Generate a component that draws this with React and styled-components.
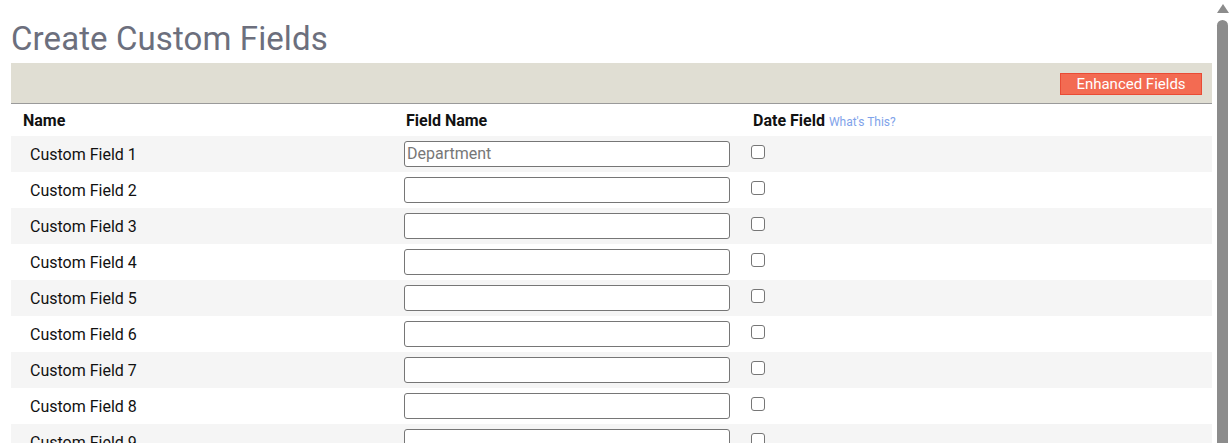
import React from "react";
import styled, { createGlobalStyle } from "styled-components";

const Global = createGlobalStyle`
  html, body { margin: 0; padding: 0; background: #fff; overflow: hidden; }
  body { font-family: Roboto, "Liberation Sans", sans-serif; color: #111; }
`;

const Frame = styled.div`
  display: flex;
  height: 100vh;
  overflow: hidden;
`;

const Main = styled.div`
  flex: 1;
  min-width: 0;
  padding: 0 3px 0 11px;
  overflow: hidden;
`;

const Scrollbar = styled.div`
  width: 15px;
  flex: none;
  background: #fff;
  display: flex;
  flex-direction: column;
  align-items: center;
  padding-top: 4px;
  gap: 7px;
`;

const Arrow = styled.div`
  width: 0;
  height: 0;
  border-left: 6px solid transparent;
  border-right: 6px solid transparent;
  border-bottom: 9px solid #8c8c8c;
`;

const Thumb = styled.div`
  width: 11px;
  flex: 1;
  margin-bottom: -20px;
  border-radius: 6px;
  background: #8c8c8c;
`;

const Title = styled.h1`
  margin: 0;
  padding-top: 19px;
  height: 63px;
  box-sizing: border-box;
  font-size: 33px;
  font-weight: 400;
  line-height: 40px;
  color: #6c6f7d;
  letter-spacing: 0.1px;
`;

const Toolbar = styled.div`
  height: 41px;
  background: #e0ded3;
  border-bottom: 1px solid #9a9a9a;
  display: flex;
  justify-content: flex-end;
  align-items: flex-start;
  padding: 10px 10px 0 0;
  box-sizing: border-box;
`;

const Button = styled.button`
  height: 22px;
  width: 142px;
  background: #f36b52;
  border: 1px solid #e94b35;
  color: #fff;
  font-family: inherit;
  font-size: 15px;
  padding: 0;
  line-height: 20px;
  cursor: pointer;
`;

const Row = styled.div`
  display: grid;
  grid-template-columns: 393px 347px 1fr;
  align-items: center;
  height: ${(p) => (p.$header ? "32px" : "36px")};
  background: ${(p) => (p.$shade ? "#f5f5f5" : "#fff")};
`;

const HeadCell = styled.div`
  font-weight: 700;
  font-size: 16px;
  padding-left: ${(p) => p.$pad || 2}px;
  display: flex;
  align-items: baseline;
  gap: 4px;
`;

const Help = styled.a`
  font-size: 12px;
  font-weight: 400;
  color: #7fa3ea;
  text-decoration: none;
`;

const Label = styled.div`
  font-size: 16px;
  padding-left: 19px;
  color: #111;
`;

const Input = styled.input`
  box-sizing: border-box;
  width: 326px;
  height: 26px;
  border: 1px solid #767676;
  border-radius: 3px;
  font-family: inherit;
  font-size: 16px;
  padding: 0 2px;
  margin-top: -1px;
  &::placeholder { color: #777; }
`;

const Check = styled.span`
  display: block;
  width: 14px;
  height: 14px;
  box-sizing: border-box;
  border: 1px solid #767676;
  border-radius: 3px;
  background: #fff;
  margin-top: -5px;
`;

export default function App() {
  const rows = Array.from({ length: 9 }, (_, i) => i + 1);
  return (
    <Frame>
      <Global />
      <Main>
        <Title>Create Custom Fields</Title>
        <Toolbar>
          <Button>Enhanced Fields</Button>
        </Toolbar>
        <Row $header>
          <HeadCell $pad={12}>Name</HeadCell>
          <HeadCell>Field Name</HeadCell>
          <HeadCell>
            Date Field <Help href="#">What's This?</Help>
          </HeadCell>
        </Row>
        {rows.map((n) => (
          <Row key={n} $shade={n % 2 === 1}>
            <Label>Custom Field {n}</Label>
            <Input placeholder={n === 1 ? "Department" : ""} />
            <Check />
          </Row>
        ))}
      </Main>
      <Scrollbar>
        <Arrow />
        <Thumb />
      </Scrollbar>
    </Frame>
  );
}
